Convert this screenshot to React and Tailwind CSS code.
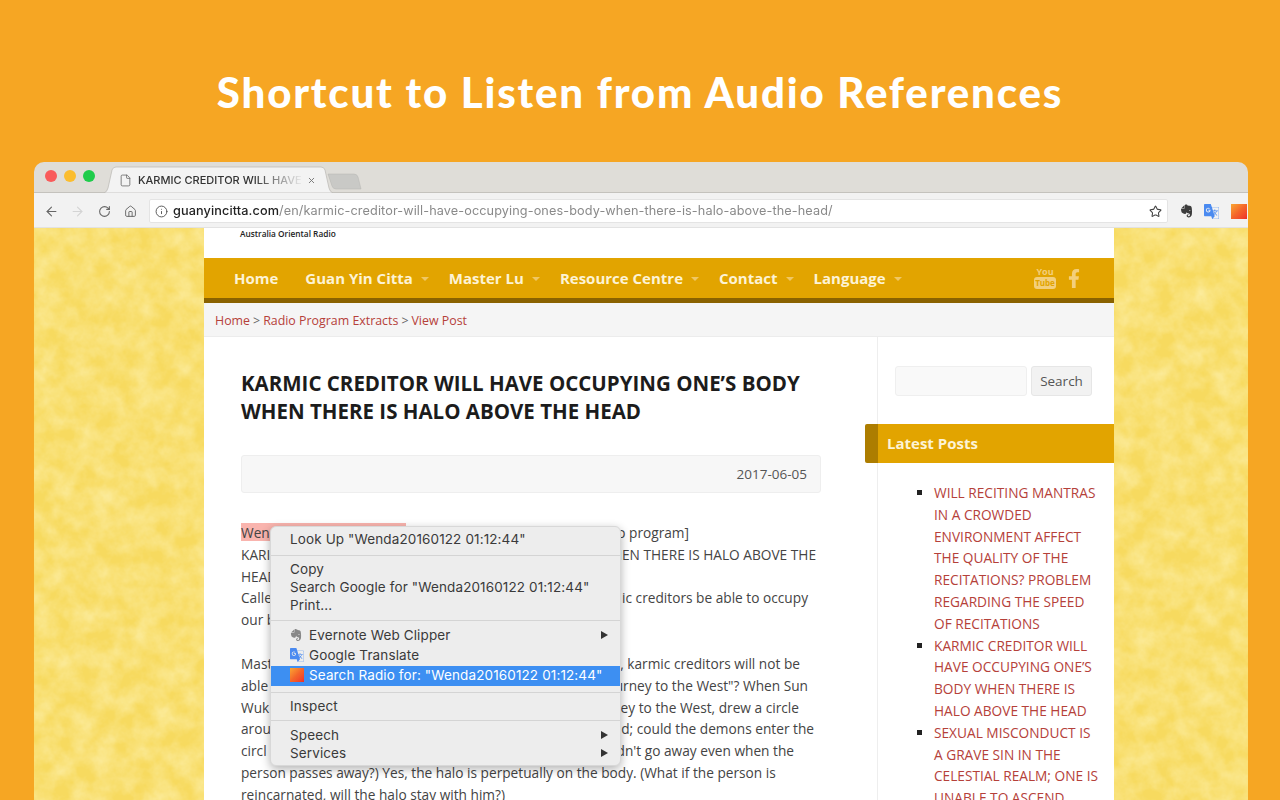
import React from 'react';
import { ArrowLeft, ArrowRight, RotateCw, Home, Info, Star, File, X } from 'lucide-react';
import { FaFacebookF } from 'react-icons/fa';
import { SiEvernote, SiGoogletranslate } from 'react-icons/si';

const navItems = [
  { label: 'Guan Yin Citta', gap: 'mr-[20px]' },
  { label: 'Master Lu', gap: 'mr-[20px]' },
  { label: 'Resource Centre', gap: 'mr-[20px]' },
  { label: 'Contact', gap: 'mr-[20px]' },
  { label: 'Language', gap: '' },
];

// what shows of each article line either side of the context menu
const bodyLines = [
  { left: 'Wen', right: 'o program]', width: 'w-[448px]', mark: true },
  { left: 'KARI', right: 'IEN THERE IS HALO ABOVE THE', width: 'w-[575px]' },
  { left: 'HEAD', right: '', width: 'w-[575px]' },
  { left: 'Calle', right: 'ic creditors be able to occupy', width: 'w-[567px]' },
  { left: 'our b', right: '', width: 'w-[567px]', after: 'mb-[22px]' },
  { left: 'Mast', right: ', karmic creditors will not be', width: 'w-[559px]' },
  { left: 'able', right: 'urney to the West"? When Sun', width: 'w-[567px]' },
  { left: 'Wuk', right: 'ey to the West, drew a circle', width: 'w-[558px]' },
  { left: 'arou', right: 'd; could the demons enter the', width: 'w-[573px]' },
  { left: 'circl', right: "dn't go away even when the", width: 'w-[553px]' },
  { left: 'person passes away?) Yes, the halo is perpetually on the body. (What if the person is', right: '', width: 'w-[575px]' },
  { left: 'reincarnated, will the halo stay with him?)', right: '', width: 'w-[575px]' },
];

const posts = [
  'WILL RECITING MANTRAS IN A CROWDED ENVIRONMENT AFFECT THE QUALITY OF THE RECITATIONS? PROBLEM REGARDING THE SPEED OF RECITATIONS',
  'KARMIC CREDITOR WILL HAVE OCCUPYING ONE’S BODY WHEN THERE IS HALO ABOVE THE HEAD',
  'SEXUAL MISCONDUCT IS A GRAVE SIN IN THE CELESTIAL REALM; ONE IS UNABLE TO ASCEND',
];

function RadioIcon({ className }) {
  return <div className={`bg-gradient-to-br from-[#f9a532] via-[#f4652a] to-[#ee2b2b] ${className}`} />;
}

function YoutubeMark() {
  return (
    <div className="flex flex-col items-center text-[#f3cf7c] leading-none w-[22px]">
      <span className="text-[9px] font-bold leading-[10px]">You</span>
      <span className="bg-[#f3cf7c] text-[#e2a400] rounded-[3px] w-[22px] h-[12px] text-[8px] font-bold leading-[12px] text-center">Tube</span>
    </div>
  );
}

function MenuRow({ children, arrow, active, icon }) {
  return (
    <div className={`flex items-center pl-[19px] pr-[12px] ${active ? 'bg-[#3d8ff2] text-white h-[20px] pb-[2px]' : 'text-[#3a3a3a] h-[18px]'}`}>
      {icon && <div className="w-[19px] flex items-center shrink-0">{icon}</div>}
      <span className="flex-1 whitespace-nowrap">{children}</span>
      {arrow && <span className="w-0 h-0 border-y-[4px] border-y-transparent border-l-[7px] border-l-[#333]" />}
    </div>
  );
}

function ContextMenu() {
  return (
    <div className="absolute left-[66px] top-[298px] w-[351px] h-[240px] bg-[#ededed] rounded-[6px] shadow-[0_3px_10px_rgba(0,0,0,0.3)] border border-[#d8d8d8] py-[2px] text-[13.5px] font-['Inter',sans-serif] tracking-[0.12px]">
      <div className="mt-[1px]"><MenuRow>Look Up "Wenda20160122 01:12:44"</MenuRow></div>
      <div className="h-px bg-[#d4d4d4] mt-[7px] mb-[4px]" />
      <MenuRow>Copy</MenuRow>
      <MenuRow>Search Google for "Wenda20160122 01:12:44"</MenuRow>
      <MenuRow>Print...</MenuRow>
      <div className="h-px bg-[#d4d4d4] mt-[6px] mb-[5px]" />
      <MenuRow arrow icon={<SiEvernote className="w-[12px] h-[12px] text-[#888]" />}>Evernote Web Clipper</MenuRow>
      <div className="h-[2px]" />
      <MenuRow icon={<SiGoogletranslate className="w-[14px] h-[14px] text-[#4a8af0]" />}>Google Translate</MenuRow>
      <div className="h-[2px]" />
      <MenuRow active icon={<RadioIcon className="w-[14px] h-[14px]" />}>Search Radio for: "Wenda20160122 01:12:44"</MenuRow>
      <div className="h-px bg-[#d4d4d4] mt-[6px] mb-[4px]" />
      <MenuRow>Inspect</MenuRow>
      <div className="h-px bg-[#d4d4d4] mt-[5px] mb-[5px]" />
      <MenuRow arrow>Speech</MenuRow>
      <MenuRow arrow>Services</MenuRow>
    </div>
  );
}

function Tabs() {
  return (
    <div className="relative flex items-start h-[31px] bg-[#dfddd8] border-b border-[#c4c2bd]">
      <div className="flex gap-[7px] ml-[11px] mt-[8px]">
        <span className="w-[12px] h-[12px] rounded-full bg-[#f95b5b]" />
        <span className="w-[12px] h-[12px] rounded-full bg-[#fbbd2e]" />
        <span className="w-[12px] h-[12px] rounded-full bg-[#1fcc4b]" />
      </div>
      <svg className="absolute left-[70px] top-[3px]" width="260" height="28" viewBox="0 0 260 28">
        <path d="M224 9 L250 9 Q253 9 254 12 L257 24 L232 24 Q229 24 228 21 Z" fill="#c9c9c6" stroke="#b5b5b1" strokeWidth="0.5" />
        <path d="M0 28 Q3 27 4 23 L8 5 Q9 2 12 2 L217 2 Q220 2 221 5 L225 23 Q226 27 229 28 Z" fill="#f3f3f3" stroke="#bcbab5" strokeWidth="0.75" />
      </svg>
      <div className="absolute left-[85px] top-[11px] flex items-center">
        <File size={13} strokeWidth={1.5} className="text-[#666]" />
        <span className="ml-[6px] w-[166px] overflow-hidden whitespace-nowrap text-[11px] font-['Inter',sans-serif] font-medium leading-[14px] text-[#333] [mask-image:linear-gradient(90deg,#000_70%,transparent)]">KARMIC CREDITOR WILL HAVE</span>
        <X size={9} strokeWidth={2.5} className="ml-[3px] text-[#777]" />
      </div>
    </div>
  );
}

function Toolbar() {
  return (
    <div className="flex items-center h-[35px] pt-[2px] bg-[#f2f2f2] border-b border-[#e2e2e2]">
      <ArrowLeft size={15} strokeWidth={1.75} className="ml-[10px] text-[#666]" />
      <ArrowRight size={15} strokeWidth={1.75} className="ml-[11px] text-[#d4d4d4]" />
      <RotateCw size={13} strokeWidth={2} className="ml-[13px] text-[#666]" />
      <Home size={13} strokeWidth={1.75} className="ml-[13px] text-[#666]" />
      <div className="flex items-center ml-[12px] w-[1019px] h-[24px] bg-white border border-[#e4e4e4] rounded-[2px] shrink-0">
        <Info size={13} strokeWidth={1.75} className="ml-[5px] text-[#555]" />
        <span className="ml-[5px] flex-1 whitespace-nowrap text-[12.7px] font-['Inter',sans-serif] tracking-[0.1px] text-[#8a8a8a]">
          <span className="text-[#222] font-medium">guanyincitta.com</span>/en/karmic-creditor-will-have-occupying-ones-body-when-there-is-halo-above-the-head/
        </span>
        <Star size={13} strokeWidth={2} className="mr-[5px] text-[#444]" />
      </div>
      <SiEvernote className="ml-[12px] w-[13px] h-[14px] text-[#3c3c3c]" />
      <SiGoogletranslate className="ml-[11px] w-[15px] h-[15px] text-[#4a8af0]" />
      <RadioIcon className="ml-[12px] w-[16px] h-[15px] shrink-0" />
    </div>
  );
}

function Nav() {
  return (
    <div className="flex items-center h-[45px] bg-[#e2a400] border-b-[5px] border-[#8a6200] text-[15px] font-bold text-[#fdf3d5]">
      <span className="ml-[30px] mr-[27px]">Home</span>
      {navItems.map((item) => (
        <div key={item.label} className={`flex items-center ${item.gap}`}>
          <span>{item.label}</span>
          <span className="ml-[8px] mt-[1px] w-0 h-0 border-x-[4px] border-x-transparent border-t-[4px] border-t-[#f0c765]" />
        </div>
      ))}
      <div className="ml-auto mr-[33px] flex items-center gap-[11px]">
        <YoutubeMark />
        <FaFacebookF className="w-[14px] h-[19px] text-[#f3cf7c]" />
      </div>
    </div>
  );
}

function Article() {
  return (
    <div className="w-[673px] pl-[37px] pt-[32px] shrink-0">
      <h1 className="text-[20.5px] leading-[28px] font-bold text-[#1c1c1c]">
        KARMIC CREDITOR WILL HAVE OCCUPYING ONE’S BODY<br />WHEN THERE IS HALO ABOVE THE HEAD
      </h1>
      <div className="flex items-center justify-end w-[580px] h-[38px] mt-[30px] pr-[13px] bg-[#f7f7f7] border border-[#eeeeee] rounded-[3px] text-[13.5px] text-[#555]">
        2017-06-05
      </div>
      <div className="mt-[29px] text-[13.7px] leading-[21.8px] text-[#444]">
        {bodyLines.map((line, i) => (
          <div key={i} className={`relative flex justify-between whitespace-nowrap ${line.width} ${line.after || ''}`}>
            {line.mark && <span className="absolute left-0 top-[1px] w-[165px] h-[18px] bg-[#f9b4ae]" />}
            <span className="relative">{line.left}</span>
            <span>{line.right}</span>
          </div>
        ))}
      </div>
    </div>
  );
}

function Sidebar() {
  return (
    <div className="relative flex-1 border-l border-[#eeeeee]">
      <div className="flex gap-[4px] ml-[17px] mt-[29px]">
        <div className="w-[132px] h-[30px] bg-[#f9f9f9] border border-[#efefef] rounded-[3px]" />
        <div className="flex items-center justify-center w-[61px] h-[30px] bg-[#f2f2f2] border border-[#e6e6e6] rounded-[3px] text-[13.5px] text-[#555]">Search</div>
      </div>
      <div className="relative flex items-center h-[39px] mt-[28px] pl-[9px] bg-[#e2a400] text-[15px] font-bold text-[#fdf3d5]">
        <div className="absolute left-[-13px] top-0 w-[13px] h-[39px] bg-[#ad7d00] rounded-l-[2px]" />
        Latest Posts
      </div>
      <ul className="[list-style-type:square] ml-[56px] mt-[19px] w-[164px] text-[13.7px] leading-[21.8px] text-[#b5413a]">
        {posts.map((post) => (
          <li key={post} className="marker:text-[#222]">{post}</li>
        ))}
      </ul>
    </div>
  );
}

export default function App() {
  return (
    <div className="w-[1280px] h-[800px] overflow-hidden bg-[#f6a623] font-['Open_Sans',sans-serif]">
      <h2 className="pt-[65px] h-[162px] text-center text-[42px] leading-[54px] font-black tracking-[1.8px] text-white font-['Lato',sans-serif]">
        Shortcut to Listen from Audio References
      </h2>
      <div className="ml-[34px] w-[1214px] h-[638px] overflow-hidden rounded-t-[10px] blur-[0.5px]">
        <Tabs />
        <Toolbar />
        <div className="relative h-[572px] overflow-hidden">
          <svg className="absolute inset-0" width="1214" height="572">
            <filter id="paper">
              <feTurbulence type="fractalNoise" baseFrequency="0.05" numOctaves="4" seed="7" />
              <feColorMatrix values="0 0 0 0 1  0 0 0 0 0.93  0 0 0 0 0.55  0.9 0 0 0 -0.25" />
            </filter>
            <rect width="1214" height="572" fill="#f7da5f" />
            <rect width="1214" height="572" filter="url(#paper)" />
          </svg>
          <div className="relative ml-[170px] w-[910px] h-[572px] bg-white">
            <div className="h-[30px] pt-[1px] pl-[36px] text-[8.3px] leading-[10px] font-semibold text-[#222]">Australia Oriental Radio</div>
            <Nav />
            <div className="flex items-center h-[34px] pt-[3px] pl-[11px] bg-[#f5f5f5] border-b border-[#ececec] text-[12.4px] text-[#b5413a]">
              Home <span className="mx-[3px] text-[#666]">&gt;</span> Radio Program Extracts <span className="mx-[3px] text-[#666]">&gt;</span> View Post
            </div>
            <div className="flex">
              <Article />
              <Sidebar />
            </div>
            <ContextMenu />
          </div>
        </div>
      </div>
    </div>
  );
}
